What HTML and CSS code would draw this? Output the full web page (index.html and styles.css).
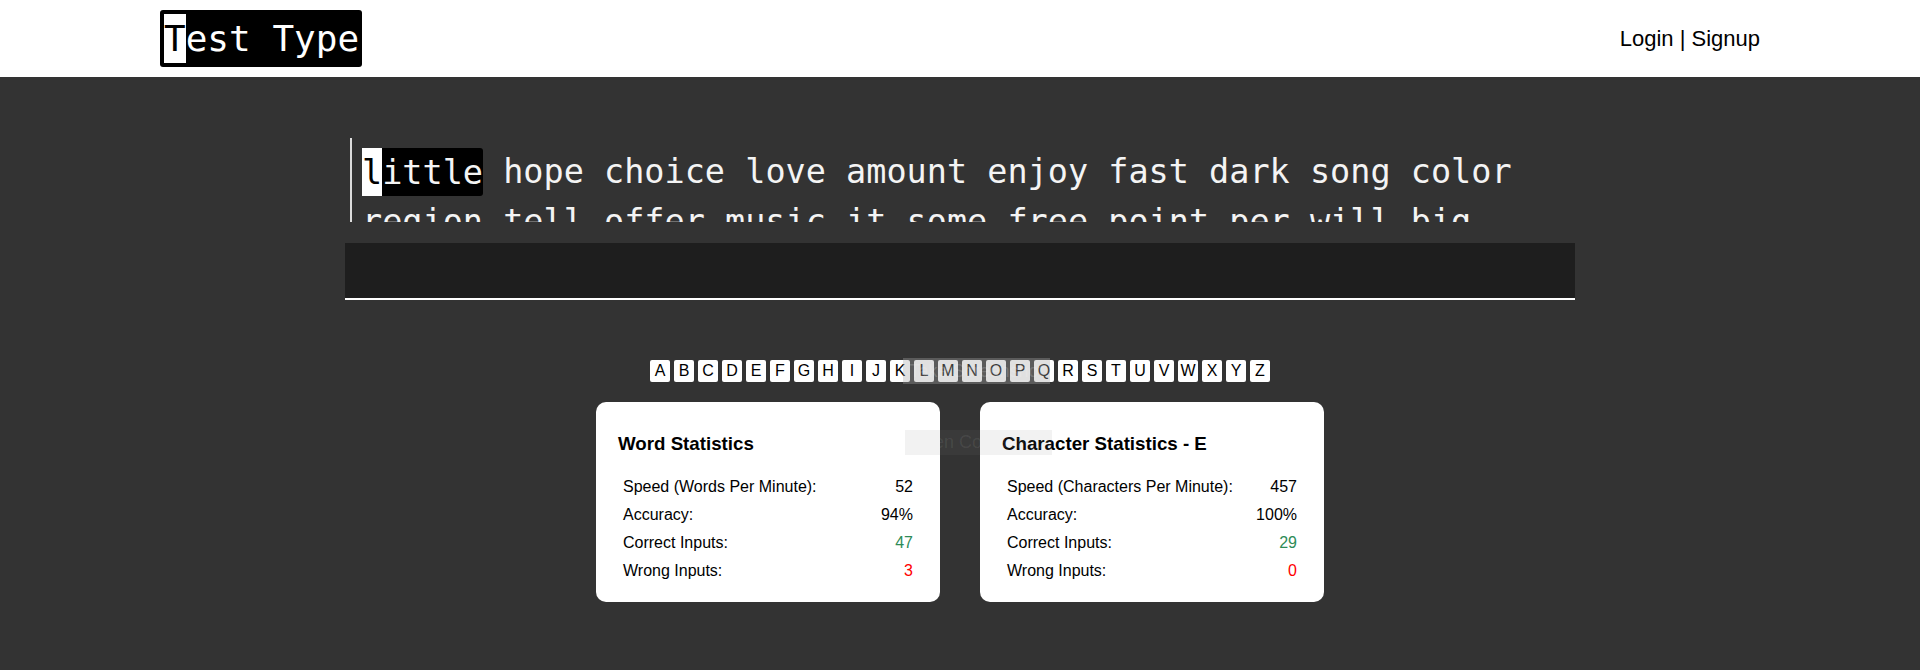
FILE: index.html
```html
<!DOCTYPE html>
<html lang="en">
<head>
<meta charset="utf-8">
<title>Test Type</title>
<link rel="stylesheet" href="styles.css">
</head>
<body>
<div class="page">
  <header class="topbar">
    <div class="logo"><span class="logo-cursor">T</span>est Type</div>
    <nav class="auth">Login | Signup</nav>
  </header>

  <main class="main">
    <div class="stage">
      <div class="typing">
        <span class="word active"><span class="cursor">l</span>ittle</span> hope choice love amount enjoy fast dark song color region tell offer music it some free point per will big between light plan kind
      </div>
      <div class="input-bar"></div>
    </div>

    <div class="letters">
      <span class="key">A</span><span class="key">B</span><span class="key">C</span><span class="key">D</span><span class="key">E</span><span class="key">F</span><span class="key">G</span><span class="key">H</span><span class="key">I</span><span class="key">J</span><span class="key">K</span><span class="key">L</span><span class="key">M</span><span class="key">N</span><span class="key">O</span><span class="key">P</span><span class="key">Q</span><span class="key">R</span><span class="key">S</span><span class="key">T</span><span class="key">U</span><span class="key">V</span><span class="key">W</span><span class="key">X</span><span class="key">Y</span><span class="key">Z</span>
    </div>

    <div class="cards">
      <section class="card">
        <h3 class="card-title">Word Statistics</h3>
        <table class="stats">
          <tr><td>Speed (Words Per Minute):</td><td class="val">52</td></tr>
          <tr><td>Accuracy:</td><td class="val">94%</td></tr>
          <tr><td>Correct Inputs:</td><td class="val good">47</td></tr>
          <tr><td>Wrong Inputs:</td><td class="val bad">3</td></tr>
        </table>
      </section>
      <section class="card">
        <h3 class="card-title">Character Statistics - E</h3>
        <table class="stats">
          <tr><td>Speed (Characters Per Minute):</td><td class="val">457</td></tr>
          <tr><td>Accuracy:</td><td class="val">100%</td></tr>
          <tr><td>Correct Inputs:</td><td class="val good">29</td></tr>
          <tr><td>Wrong Inputs:</td><td class="val bad">0</td></tr>
        </table>
      </section>
    </div>
  </main>

  <div class="ghost ghost-shot">Take Screenshot</div>
  <div class="ghost ghost-folder">Open Containing Folder</div>
</div>
</body>
</html>
```

FILE: styles.css
```css
html, body {
  margin: 0;
  padding: 0;
}

body {
  background: #333333;
  font-family: "Liberation Sans", Arial, sans-serif;
  min-height: 670px;
}

.page {
  position: relative;
  min-height: 670px;
}

/* Header */
.topbar {
  height: 77px;
  background: #ffffff;
  display: flex;
  align-items: center;
  justify-content: space-between;
  padding: 0 160px;
  box-sizing: border-box;
}

.logo {
  background: #000000;
  color: #ffffff;
  font-family: "DejaVu Sans Mono", monospace;
  font-size: 36px;
  line-height: 49px;
  padding: 4px 3px 4px 4px;
  border-radius: 3px;
  white-space: pre;
}

.logo-cursor {
  display: inline-block;
  background: #ffffff;
  color: #000000;
  height: 49px;
  vertical-align: top;
}

.auth {
  font-size: 22px;
  color: #000000;
}

/* Main */
.main {
  padding-top: 61px;
}

.stage {
  width: 1230px;
  margin: 0 auto;
}

.typing {
  margin-left: 5px;
  border-left: 2px solid #dddddd;
  padding: 9px 0 0 10px;
  height: 75px;
  overflow: hidden;
  color: #f4f4f4;
  font-family: "DejaVu Sans Mono", monospace;
  font-size: 33.5px;
  line-height: 50px;
}

.word.active {
  background: #000000;
  padding: 4.5px 0;
  border-radius: 3px;
}

.cursor {
  background: #ffffff;
  color: #000000;
  padding: 4.5px 0;
}

.input-bar {
  margin-top: 21px;
  height: 55px;
  background: #1e1e1e;
  border-bottom: 2px solid #ffffff;
}

/* Letters */
.letters {
  margin-top: 60px;
  display: flex;
  justify-content: center;
  gap: 4px;
}

.key {
  width: 20px;
  height: 22px;
  background: #ffffff;
  color: #000000;
  border-radius: 2px;
  font-size: 16px;
  line-height: 22px;
  text-align: center;
}

/* Cards */
.cards {
  margin-top: 20px;
  display: flex;
  justify-content: center;
  gap: 40px;
}

.card {
  width: 344px;
  height: 200px;
  box-sizing: border-box;
  background: #ffffff;
  border-radius: 10px;
  padding: 12px 21px 0 21px;
}

.card-title {
  font-size: 18.72px;
  font-weight: bold;
  margin: 18.72px 0 17.7px 1px;
  color: #000000;
}

.stats {
  width: 100%;
  border-spacing: 2px;
  font-size: 16px;
  color: #000000;
}

.stats td {
  padding: 4px;
}

.stats .val {
  text-align: right;
}

.stats .good {
  color: #2e8b57;
}

.stats .bad {
  color: #ff0000;
}

/* Faint overlay tooltips over the page */
.ghost {
  position: absolute;
  white-space: nowrap;
  overflow: hidden;
  box-sizing: border-box;
}

.ghost-shot {
  left: 903px;
  top: 358px;
  width: 147px;
  height: 26px;
  background: rgba(166, 166, 166, 0.35);
  color: rgba(255, 255, 255, 0.18);
  font-size: 18px;
  line-height: 26px;
  text-align: center;
}

.ghost-folder {
  left: 905px;
  top: 430px;
  width: 147px;
  height: 25px;
  background: rgba(131, 131, 131, 0.1);
  color: rgba(255, 255, 255, 0.08);
  font-size: 18px;
  line-height: 25px;
  padding-left: 5px;
}
```
